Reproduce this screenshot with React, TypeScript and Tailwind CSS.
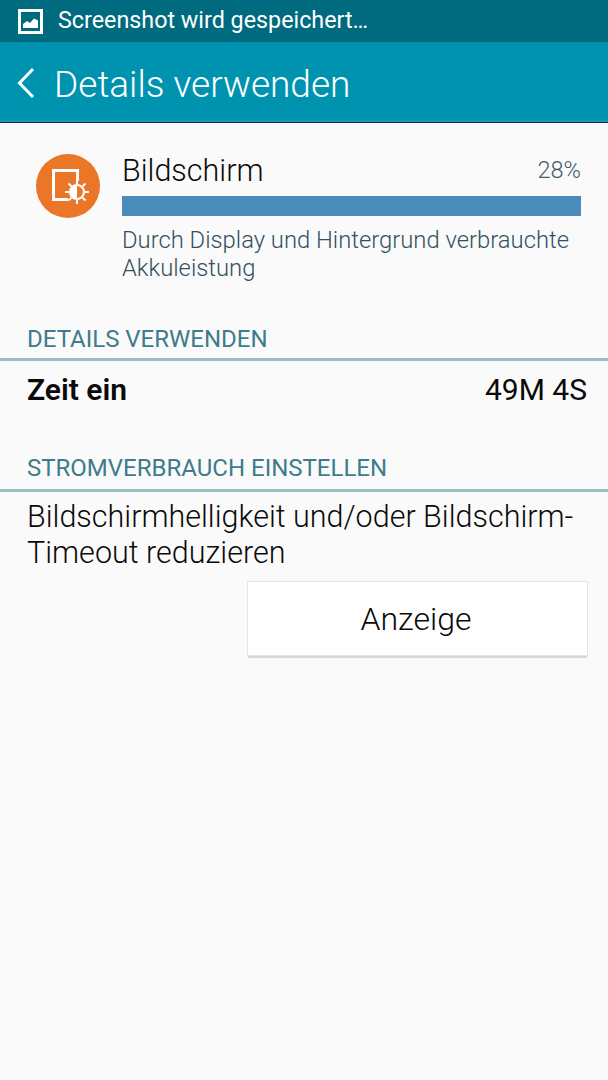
export default function App() {
  return (
    <div className="w-[608px] h-[1080px] bg-[#fafafa] overflow-hidden font-['Roboto',sans-serif] font-light">
      {/* Status bar */}
      <div className="h-[42px] bg-[#006b7f] flex items-center pl-[18px] gap-[15px] text-white">
        <svg width="25" height="25" viewBox="0 0 25 25">
          <rect x="1.500" y="1.500" width="22" height="22" fill="none" stroke="#fff" strokeWidth="3" />
          <path d="M5 19v-4l4-3 3 2 4-4.500 4 2V19z" fill="#fff" />
        </svg>
        <span className="text-[23.3px] leading-[28px] mb-[2px] font-normal">Screenshot wird gespeichert…</span>
      </div>

      {/* Action bar */}
      <div className="h-[80px] bg-[#0093b0] border-b-2 border-[#0a9cb8] flex items-center pl-[17px] gap-[19px] text-white">
        <svg className="mt-[3px]" width="18" height="32" viewBox="0 0 18 32" fill="none">
          <path d="M16 2 2.500 16 16 30" stroke="#fff" strokeWidth="3" />
        </svg>
        <span className="text-[37px] leading-[44px] mt-[8px]">Details verwenden</span>
      </div>
      <div className="h-px bg-[#12303a]" />

      {/* Battery entry */}
      <div className="flex pt-[31px] pl-[36px] pr-[27px] gap-[22px]">
        <div className="w-[64px] h-[64px] rounded-full bg-[#ec7627] shrink-0">
          <svg width="64" height="64" viewBox="0 0 64 64" fill="none">
            <path d="M41.500 27V16.500H17.500V45.500H32" stroke="#fff" strokeWidth="3" />
            <circle cx="41" cy="38" r="7" stroke="#fff" strokeWidth="2" />
            <path d="M41 31a7 7 0 0 0 0 14z" fill="#fff" />
            <path d="M41 26v4M41 46v4M29 38h4M49 38h4M32.500 29.500l2.800 2.800M46.700 43.700l2.800 2.800M32.500 46.500l2.800-2.800M46.700 32.300l2.800-2.800" stroke="#fff" strokeWidth="2" />
          </svg>
        </div>
        <div className="flex-1">
          <div className="flex items-center justify-between h-[33px]">
            <span className="text-[30.500px] text-[#0a0a0a]">Bildschirm</span>
            <span className="text-[23.500px] text-[#3f5a6b]">28%</span>
          </div>
          <div className="h-[20px] mt-[9px] bg-[#4a8cbb]" />
          <p className="mt-[10px] text-[23.800px] leading-[28px] text-[#33505f]">
            Durch Display und Hintergrund verbrauchte Akkuleistung
          </p>
        </div>
      </div>

      {/* Details */}
      <div className="mt-[43px] px-[27px] h-[29px] text-[24px] leading-[29px] text-[#3d7c8c] font-normal">DETAILS VERWENDEN</div>
      <div className="h-[3px] mt-[4px] bg-[#9dbcc0]" />
      <div className="flex justify-between pl-[27px] pr-[21px] pt-[11px] h-[93px] text-[30px] leading-[36px] text-[#0a0a0a]">
        <span className="font-semibold">Zeit ein</span>
        <span className="font-normal">49M 4S</span>
      </div>

      {/* Power saving */}
      <div className="px-[27px] h-[29px] text-[24px] leading-[29px] text-[#3d7c8c] font-normal">STROMVERBRAUCH EINSTELLEN</div>
      <div className="h-[3px] mt-[6px] bg-[#9dbcc0]" />
      <p className="px-[27px] pr-[20px] pt-[7px] text-[30.500px] leading-[36px] text-[#0a0a0a]">
        Bildschirmhelligkeit und/oder Bildschirm-Timeout reduzieren
      </p>
      <div className="flex justify-end pr-[20px] mt-[10px]">
        <button className="w-[341px] h-[75px] bg-white border border-[#e4e4e4] shadow-[0_3px_1px_-1px_#d8d8d8] text-[32px] pr-[3px] text-[#0a0a0a]">
          Anzeige
        </button>
      </div>
    </div>
  )
}
